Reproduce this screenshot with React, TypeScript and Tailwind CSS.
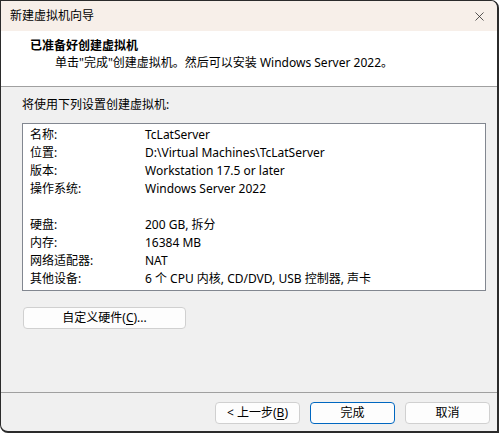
import { X } from 'lucide-react';

const font = { fontFamily: '"Noto Sans", "Noto Sans CJK SC", sans-serif' };

const rows: ([string, string] | null)[] = [
  ['名称:', 'TcLatServer'],
  ['位置:', 'D:\\Virtual Machines\\TcLatServer'],
  ['版本:', 'Workstation 17.5 or later'],
  ['操作系统:', 'Windows Server 2022'],
  null,
  ['硬盘:', '200 GB, 拆分'],
  ['内存:', '16384 MB'],
  ['网络适配器:', 'NAT'],
  ['其他设备:', '6 个 CPU 内核, CD/DVD, USB 控制器, 声卡'],
];

function Btn({ children, primary }: { children: React.ReactNode; primary?: boolean }) {
  return (
    <button
      className={`h-[22px] w-[85px] rounded-[4px] border bg-[#fdfdfd] text-[12px] text-black flex items-center justify-center ${
        primary ? 'border-[#0067c0]' : 'border-[#d0d0d0]'
      }`}
    >
      {children}
    </button>
  );
}

export default function App() {
  return (
    <div
      className="w-[499px] h-[433px] bg-[#f0f0f0] border-l border-t border-r-2 border-b-2 border-[#2b2b2b] rounded-tr-[8px] rounded-bl-[8px] overflow-hidden flex flex-col text-[12px] text-black leading-[18px]"
      style={font}
    >
      <div className="h-[30px] bg-[#f7efe9] flex items-center justify-between pl-[9px] pr-[10px] shrink-0">
        <span>新建虚拟机向导</span>
        <X size={15} strokeWidth={1.2} className="text-[#222]" />
      </div>
      <div className="h-[56px] bg-white border-b border-[#a0a0a0] shrink-0 pt-[6px]">
        <div className="pl-[29px] font-bold">已准备好创建虚拟机</div>
        <div className="pl-[54px] mt-[-1px]">单击"完成"创建虚拟机。然后可以安装 Windows Server 2022。</div>
      </div>
      <div className="flex-1 flex flex-col pl-[21px] pr-[11px] pt-[9px]">
        <div>将使用下列设置创建虚拟机:</div>
        <div className="mt-[9px] h-[168px] bg-white border border-[#828790] pt-[2px] pl-[7px]">
          {rows.map((r, i) =>
            r ? (
              <div key={i} className="flex h-[18px] items-center">
                <span className="w-[115px]">{r[0]}</span>
                <span>{r[1]}</span>
              </div>
            ) : (
              <div key={i} className="h-[18px]" />
            ),
          )}
        </div>
        <button className="mt-[16px] ml-[1px] h-[22px] w-[163px] rounded-[4px] border border-[#d0d0d0] bg-[#fdfdfd] flex items-center justify-center text-[12px]">
          自定义硬件(<span className="underline underline-offset-2">C</span>)...
        </button>
      </div>
      <div className="h-[39px] border-t border-[#a0a0a0] flex justify-end items-start gap-[10px] pr-[7px] pt-[9px] shrink-0">
        <Btn>
          &lt; 上一步(<span className="underline underline-offset-2">B</span>)
        </Btn>
        <Btn primary>完成</Btn>
        <Btn>取消</Btn>
      </div>
    </div>
  );
}
